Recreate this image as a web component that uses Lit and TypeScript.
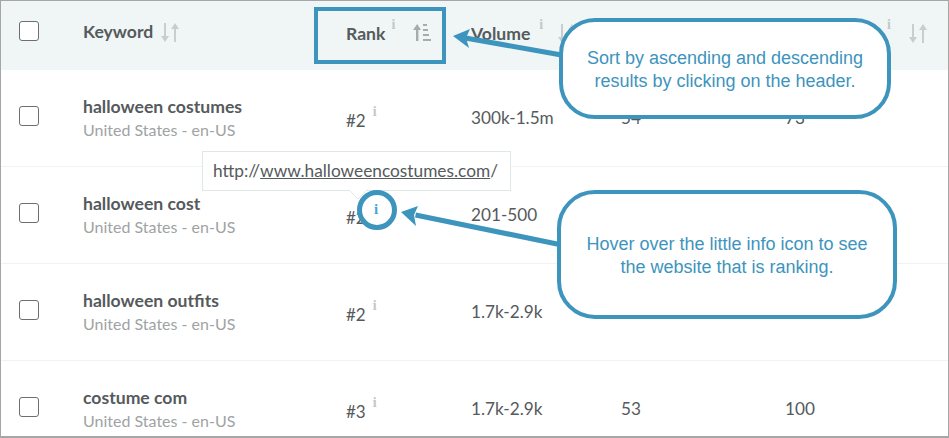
import { LitElement, html, css, svg } from "lit";
import { customElement } from "lit/decorators.js";

const sortBoth = html`<svg class="sort" width="18" height="19" viewBox="0 0 18 19">
  <g fill="#c9cdcd">
    <path d="M3 0h2v13h3l-4 6-4-6h3z" />
    <path d="M13 19h2V6h3l-4-6-4 6h3z" />
  </g>
</svg>`;

const sortAsc = html`<svg class="sort" width="18" height="19" viewBox="0 0 18 19">
  <g fill="#a6abab">
    <path d="M3 17h2.400V6H8L4.200 0 0 6h3z" />
    <rect x="10" y="0" width="4" height="2" />
    <rect x="10" y="5" width="5" height="2" />
    <rect x="10" y="10" width="6" height="2" />
    <rect x="10" y="15" width="8" height="2" />
  </g>
</svg>`;

const rows = [
  { k: "halloween costumes", r: "#2", v: "300k-1.5m", a: "54", b: "73", cls: "r1" },
  { k: "halloween cost", r: "#2", v: "201-500", a: "", b: "", cls: "r2" },
  { k: "halloween outfits", r: "#2", v: "1.7k-2.9k", a: "", b: "", cls: "r3" },
  { k: "costume com", r: "#3", v: "1.7k-2.9k", a: "53", b: "100", cls: "r4" },
];

@customElement("app-root")
export class AppRoot extends LitElement {
  static styles = css`
    :host {
      display: block;
      width: 949px;
      height: 438px;
      position: relative;
      overflow: hidden;
      background: #fff;
      font-family: Lato, "Liberation Sans", sans-serif;
      color: #555a5c;
    }
    .frame {
      box-sizing: border-box;
      width: 949px;
      height: 438px;
      border: 1px solid #a6a6a6;
      border-bottom-width: 2px;
      overflow: hidden;
    }
    .head,
    .row {
      display: grid;
      grid-template-columns: 82px 263px 125px 150px 164px 1fr;
    }
    .head {
      height: 69px;
      background: #f0f6f6;
      font-size: 17.600px;
      font-weight: 700;
    }
    .row {
      height: 96px;
      border-bottom: 1px solid #f0f3f3;
    }
    .row:last-child {
      border-bottom: 0;
    }
    .cb {
      box-sizing: border-box;
      width: 20px;
      height: 20px;
      margin-left: 18px;
      border: 1px solid #6b6f70;
      border-radius: 3px;
      background: #fff;
    }
    .head .cb {
      margin-top: 20px;
    }
    .row .cb {
      margin-top: 36px;
    }
    .hcell {
      display: flex;
      align-items: flex-start;
      padding-top: 20px;
      height: 24px;
      line-height: 22px;
    }
    .hcell.rank {
      padding-top: 22px;
    }
    .hcell .sort {
      margin-left: 8px;
      margin-top: 2px;
    }
    .hcell.rank .sort {
      margin-top: 1px;
    }
    .inf {
      font-family: "Liberation Serif", serif;
      font-size: 14px;
      font-weight: 700;
      line-height: 14px;
      color: #c4c8c8;
    }
    .inf.on {
      color: #4aa3dc;
    }
    .hcell .inf {
      margin-left: 6px;
      margin-top: -5px;
    }
    .hcell.rk-col .inf {
      margin-right: 10px;
    }
    .hcell.vol .inf {
      margin-left: 9px;
      margin-right: 7px;
    }
    .hcell.end {
      grid-column: 6;
      justify-content: flex-end;
      padding-right: 21px;
    }
    .hcell.end .inf {
      margin-right: 10px;
    }
    .kw {
      padding-top: 26px;
    }
    .kw b {
      display: block;
      font-size: 17.600px;
      line-height: 22px;
      font-weight: 700;
      color: #555a5c;
    }
    .kw span {
      display: block;
      font-size: 16px;
      line-height: 24px;
      color: #9ea3a4;
    }
    .rk {
      padding-top: 39px;
      display: flex;
      align-items: flex-start;
      font-size: 17px;
      line-height: 24px;
    }
    .rk .inf {
      margin-left: 7px;
      margin-top: -4px;
    }
    .val {
      padding-top: 36px;
      font-size: 17.200px;
      line-height: 24px;
    }
    .box {
      position: absolute;
      box-sizing: border-box;
      left: 314px;
      top: 7px;
      width: 132px;
      height: 57px;
      border: 4px solid #3d94bd;
    }
    .arrows {
      position: absolute;
      left: 0;
      top: 0;
    }
    .call {
      position: absolute;
      box-sizing: border-box;
      display: flex;
      align-items: center;
      justify-content: center;
      text-align: center;
      background: #fff;
      border: 4px solid #3d94bd;
      color: #3d94bd;
      font-family: "Liberation Sans", Arial, sans-serif;
      font-size: 18px;
      line-height: 23px;
    }
    .call.a {
      left: 559px;
      top: 18px;
      width: 332px;
      height: 101px;
      border-radius: 36px;
      padding-top: 2px;
    }
    .call.b {
      left: 557px;
      top: 190px;
      width: 340px;
      height: 129px;
      border-radius: 38px;
      padding-top: 2px;
    }
    .tip {
      position: absolute;
      box-sizing: border-box;
      left: 202px;
      top: 151px;
      width: 309px;
      height: 40px;
      background: #fff;
      border: 1px solid #dfe7e7;
      font-size: 17.300px;
      line-height: 38px;
      padding-left: 10px;
      white-space: nowrap;
    }
    .tip u {
      text-decoration-thickness: 1px;
    }
    .notch {
      position: absolute;
      left: 349px;
      top: 190px;
    }
    .ring {
      position: absolute;
      box-sizing: border-box;
      left: 357px;
      top: 190px;
      width: 40px;
      height: 40px;
      border: 5px solid #3d94bd;
      border-radius: 50%;
      background: #fff;
      display: flex;
      align-items: center;
      justify-content: center;
      padding-bottom: 3px;
      padding-right: 2px;
    }
    .ring .inf {
      font-size: 15px;
    }
  `;

  render() {
    return html`
      <div class="frame">
        <div class="head">
          <div><div class="cb"></div></div>
          <div class="hcell">Keyword${sortBoth}</div>
          <div class="hcell rank rk-col">Rank<span class="inf">i</span>${sortAsc}</div>
          <div class="hcell rank vol">Volume<span class="inf">i</span>${sortBoth}</div>
          <div class="hcell rank end"><span class="inf">i</span>${sortBoth}</div>
        </div>
        ${rows.map(
          (r) => html`<div class="row ${r.cls}">
            <div><div class="cb"></div></div>
            <div class="kw"><b>${r.k}</b><span>United States - en-US</span></div>
            <div class="rk">${r.r}<span class="inf">i</span></div>
            <div class="val">${r.v}</div>
            <div class="val">${r.a}</div>
            <div class="val">${r.b}</div>
          </div>`
        )}
      </div>

      <svg class="arrows" width="949" height="438" viewBox="0 0 949 438">
        ${svg`<g fill="#3d94bd" stroke="none">
          <path d="M466 35.500L562 52.500L561 57.500L465 40.500Z" />
          <path d="M453 36L470 29L466 38L469 48Z" />
          <path d="M416 212.500L560 242L559 247L415 217.500Z" />
          <path d="M401 212L418 206L414 215L416 226Z" />
        </g>`}
      </svg>

      <div class="box"></div>
      <div class="call a">
        <div>Sort by ascending and descending<br />results by clicking on the header.</div>
      </div>
      <div class="call b">
        <div>Hover over the little info icon to see<br />the website that is ranking.</div>
      </div>
      <div class="tip">http://<u>www.halloweencostumes.com</u>/</div>
      <svg class="notch" width="20" height="12" viewBox="0 0 20 12">
        <path d="M0 0L9 9L18 0Z" fill="#fff" />
        <path d="M0 0L9 9L18 0" fill="none" stroke="#e3eaea" />
      </svg>
      <div class="ring"><span class="inf on">i</span></div>
    `;
  }
}
